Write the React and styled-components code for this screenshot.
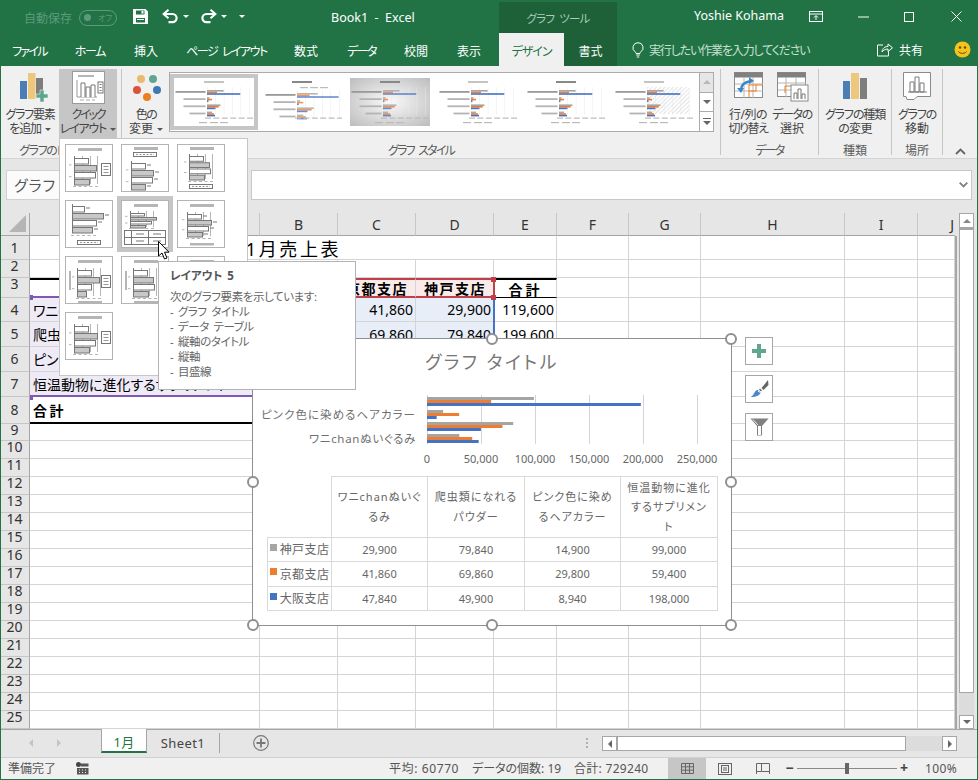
import React from 'react';
import styled, {createGlobalStyle} from 'styled-components';

const GlobalStyle = createGlobalStyle`
  html, body { margin: 0; padding: 0; background: #fff; }
  body {
    font-family: "Noto Sans", "Noto Sans CJK JP", sans-serif;
    font-feature-settings: "palt";
    overflow: hidden;
  }
  * { box-sizing: border-box; }
`;

const GREEN = '#217346';
const DARK_GREEN = '#1e6139';
const GREY = '#a5a5a5';
const ORANGE = '#ed7d31';
const BLUE = '#4472c4';

const Window = styled.div`
  position: relative;
  width: 978px;
  height: 780px;
  overflow: hidden;
  display: flex;
  flex-direction: column;
  background: #fff;
  &::after {
    content: '';
    position: absolute;
    inset: 0;
    border: 1px solid ${GREEN};
    pointer-events: none;
    z-index: 9;
  }
`;

/* ---------- title bar ---------- */
const TitleBar = styled.div`
  height: 33px;
  display: flex;
  background: ${GREEN};
  color: #fff;
  font-size: 12px;
`;
const Qat = styled.div`
  width: 331px;
  padding-left: 24px;
  display: flex;
  align-items: center;
`;
const QatItem = styled.div`
  margin-left: ${p => p.$ml || 0}px;
  display: flex;
  align-items: center;
`;
const AutoSave = styled.span`
  color: #5c9a7b;
  font-size: 12px;
  width: 48px;
  white-space: nowrap;
  position: relative;
  top: 1px;
`;
const Toggle = styled.div`
  margin-left: 7px;
  width: 38px;
  height: 16px;
  border: 1px solid #5c9a7b;
  border-radius: 8px;
  display: flex;
  align-items: center;
  padding-left: 4px;
  color: #5c9a7b;
  font-size: 8px;
  gap: 7px;
  position: relative;
  top: 1px;
  &::before {
    content: '';
    width: 7px;
    height: 7px;
    border-radius: 50%;
    background: #5c9a7b;
  }
`;
const Caret = styled.span`
  display: inline-block;
  margin-left: ${p => p.$ml || 0}px;
  width: 0;
  height: 0;
  border-left: 3px solid transparent;
  border-right: 3px solid transparent;
  border-top: 3px solid ${p => p.$color || '#fff'};
`;
const DocTitle = styled.div`
  width: 168px;
  font-size: 12.5px;
  line-height: 35px;
  white-space: pre;
`;
const ToolHeader = styled.div`
  margin-top: 2px;
  width: 118px;
  background: ${DARK_GREEN};
  color: #a9cdb9;
  font-size: 11.5px;
  letter-spacing: -.8px;
  word-spacing: 3px;
  text-align: center;
  line-height: 34px;
`;
const UserName = styled.div`
  margin-left: 77px;
  width: 90px;
  font-size: 12.5px;
  line-height: 32px;
  white-space: nowrap;
`;
const WinButton = styled.div`
  margin-left: ${p => p.$ml}px;
  display: flex;
  align-items: center;
`;

/* ---------- tab row ---------- */
const TabRow = styled.div`
  height: 33px;
  display: flex;
  background: ${GREEN};
  color: #fff;
  font-size: 12px;
`;
const RibbonTab = styled.div`
  width: ${p => p.$w}px;
  text-align: center;
  line-height: 37px;
  white-space: nowrap;
  letter-spacing: ${p => p.$ls || 0}px;
  word-spacing: 3px;
  background: ${p => (p.$active ? '#f0f0f0' : p.$dark ? DARK_GREEN : 'transparent')};
  color: ${p => (p.$active ? GREEN : '#fff')};
`;
const TellMe = styled.div`
  margin-left: 15px;
  width: 245px;
  display: flex;
  align-items: center;
  gap: 5px;
  color: #c8e0d2;
  font-size: 12px;
  letter-spacing: -1.15px;
  white-space: nowrap;
`;
const Share = styled.div`
  width: 60px;
  display: flex;
  align-items: center;
  gap: 6px;
  white-space: nowrap;
`;
const Smiley = styled.div`
  margin-left: 17px;
  display: flex;
  align-items: center;
`;

/* ---------- ribbon ---------- */
const Ribbon = styled.div`
  height: 93px;
  display: flex;
  padding-top: 3px;
  background: #f0f0f0;
  border-bottom: 1px solid #d4d4d4;
  color: #444;
  font-size: 12px;
`;
const RibbonGroup = styled.div`
  width: ${p => p.$w}px;
  height: 86px;
  border-right: 1px solid #c6c6c6;
  display: flex;
  flex-direction: column;
`;
const GroupBody = styled.div`
  height: 72px;
  display: flex;
  align-items: flex-start;
`;
const GroupLabel = styled.div`
  height: 14px;
  line-height: 19px;
  text-align: center;
  color: #5a5a5a;
  font-size: 12px;
  letter-spacing: ${p => p.$ls || 0}px;
  word-spacing: 3px;
  white-space: nowrap;
`;
const RibbonButton = styled.div`
  width: ${p => p.$w}px;
  height: 69px;
  margin-left: ${p => p.$ml || 0}px;
  background: ${p => (p.$active ? '#c6c6c6' : 'transparent')};
  display: flex;
  flex-direction: column;
  align-items: center;
  line-height: 14px;
  text-align: center;
  white-space: nowrap;
`;
const IconSlot = styled.div`
  height: 39px;
  padding-top: 3px;
  padding-left: ${p => (p.$dx || 0) * 2}px;
  display: flex;
  justify-content: center;
`;
const LabelLine = styled.span`
  letter-spacing: ${p => p.$ls || 0}px;
`;
const Gallery = styled.div`
  margin-left: 2px;
  margin-top: 3px;
  width: 545px;
  height: 60px;
  border: 1px solid #ababab;
  display: flex;
  background: #fff;
`;
const StyleCell = styled.div`
  width: 88px;
  height: 56px;
  margin-top: 1px;
  border: 4px solid ${p => (p.$active ? '#c6c6c6' : 'transparent')};
`;
const ThumbSvg = styled.svg`
  display: block;
  filter: blur(.3px);
`;
const GalleryScroll = styled.div`
  margin-left: 1px;
  width: 14px;
  display: flex;
  flex-direction: column;
  background: #f7f7f7;
  border-left: 1px solid #ababab;
`;
const GalleryArrow = styled.div`
  flex: 1;
  display: flex;
  flex-direction: column;
  gap: 2px;
  align-items: center;
  justify-content: center;
  background: ${p => (p.$off ? '#e6e6e6' : '#fff')};
  border-bottom: 1px solid #ababab;
  &:last-child { border-bottom: 0; }
`;
const UpCaret = styled(Caret)`
  border-top: 0;
  border-bottom: 4px solid ${p => p.$color || '#b8b8b8'};
  border-left-width: 4px;
  border-right-width: 4px;
`;
const BarMark = styled.span`
  width: 8px;
  height: 1px;
  background: #666;
`;
const Collapse = styled.div`
  margin-left: 12px;
  align-self: flex-end;
  padding-bottom: 3px;
  display: flex;
`;

/* ---------- formula bar ---------- */
const FormulaBar = styled.div`
  height: 54px;
  padding: 11px 6px 0;
  display: flex;
  background: #e6e6e6;
`;
const NameBox = styled.div`
  width: 200px;
  height: 30px;
  background: #fbfbfb;
  border: 1px solid #d0d0d0;
  padding-left: 7px;
  font-size: 15px;
  line-height: 29px;
  letter-spacing: 1px;
  color: #555;
`;
const FormulaInput = styled.div`
  margin-left: 45px;
  width: 721px;
  height: 30px;
  background: #fff;
  border: 1px solid #c8c8c8;
  display: flex;
  justify-content: flex-end;
  align-items: center;
  padding-right: 3px;
`;

/* ---------- sheet ---------- */
const SheetArea = styled.div`
  height: 516px;
  display: flex;
  background: #e6e6e6;
`;
const Grid = styled.div`
  position: relative;
  display: grid;
  grid-template-columns: ${p => p.$cols};
  grid-template-rows: ${p => p.$rows};
  margin-right: 2px;
  background: #fff;
  width: 955px;
  height: 516px;
  &::after {
    content: '';
    position: absolute;
    top: 23px;
    right: -2px;
    bottom: 0;
    width: 2px;
    background: #a6a6a6;
  }
`;
const Corner = styled.div`
  background: #e6e6e6;
  border-bottom: 1px solid #a6a6a6;
  border-right: 1px solid #a6a6a6;
  display: flex;
  align-items: flex-end;
  justify-content: flex-end;
  padding: 0 3px 3px 0;
  &::before {
    content: '';
    width: 0;
    height: 0;
    border-left: 17px solid transparent;
    border-bottom: 17px solid #b5b5b5;
  }
`;
const ColHead = styled.div`
  background: #e6e6e6;
  border-bottom: 1px solid #a6a6a6;
  border-right: ${p => (p.$last ? '0' : '1px solid #c6c6c6')};
  display: flex;
  align-items: center;
  justify-content: ${p => (p.$last ? 'flex-end' : 'center')};
  padding-right: ${p => (p.$last ? 1 : 0)}px;
  font-size: 14px;
  color: #333;
`;
const RowHead = styled.div`
  background: #e6e6e6;
  border-bottom: 1px solid #c6c6c6;
  border-right: 1px solid #a6a6a6;
  display: flex;
  align-items: ${p => (p.$short ? 'flex-start' : 'center')};
  justify-content: center;
  font-size: 14px;
  line-height: ${p => (p.$short ? 12 : 14)}px;
  color: #333;
`;
const Cell = styled.div`
  grid-column: ${p => (p.$span ? `span ${p.$span}` : 'auto')};
  border-right: 1px solid #d4d4d4;
  border-bottom: ${p => p.$bottom || '1px solid #d4d4d4'};
  border-top: ${p => p.$top || '0'};
  background: ${p => p.$fill || '#fff'};
  color: #000;
  display: flex;
  align-items: center;
  justify-content: ${p => p.$align || 'flex-start'};
  padding: 0 2px 0 3px;
  font-size: ${p => p.$size || 14}px;
  font-weight: ${p => (p.$bold ? 700 : 400)};
  letter-spacing: ${p => p.$spacing || 0}px;
  white-space: nowrap;
  min-width: 0;
`;
const Marker = styled.div`
  position: absolute;
  left: ${p => p.$x}px;
  top: ${p => p.$y}px;
  width: ${p => p.$w}px;
  height: ${p => p.$h}px;
  background: ${p => p.$color};
  z-index: 1;
`;
const VScroll = styled.div`
  width: 15px;
  margin-left: 2px;
  display: flex;
  flex-direction: column;
`;
const VButton = styled.div`
  height: ${p => p.$h}px;
  background: #fff;
  border: 1px solid #a6a6a6;
  display: flex;
  align-items: center;
  justify-content: center;
`;
const VThumb = styled.div`
  height: 465px;
  background: #fff;
  border: 1px solid #a6a6a6;
  border-top-width: 2px;
`;
const VTrack = styled.div`
  flex: 1;
  background: #dcdcdc;
`;
const DownCaret = styled(Caret)`
  border-top: 4px solid #666;
  border-left-width: 4px;
  border-right-width: 4px;
`;

/* ---------- chart ---------- */
const Chart = styled.div`
  position: absolute;
  left: 252px;
  top: 338px;
  width: 480px;
  height: 288px;
  background: #fff;
  border: 1px solid #8f8f8f;
  z-index: 1;
  display: flex;
  flex-direction: column;
`;
const ChartTitle = styled.div`
  margin-top: 8px;
  height: 30px;
  line-height: 30px;
  text-align: center;
  font-size: 18px;
  letter-spacing: 2.5px;
  color: #777;
`;
const PlotSvg = styled.svg`
  display: block;
  margin-top: 18px;
`;
const DataTable = styled.table`
  margin: 9px 0 0 14px;
  width: 451px;
  border-collapse: collapse;
  table-layout: fixed;
  font-size: 11px;
  color: #666;
  text-align: center;
  td {
    border: 1px solid #d9d9d9;
    padding: 0;
    height: 24.5px;
    white-space: nowrap;
  }
  tr:first-child td:first-child {
    border-top: 0;
    border-left: 0;
  }
  tr:first-child td {
    height: 60.5px;
    line-height: 19.5px;
    letter-spacing: 1px;
  }
`;
const LegendCell = styled.div`
  display: flex;
  align-items: center;
  justify-content: center;
  gap: 3px;
  font-size: 12px;
  letter-spacing: .4px;
`;
const Swatch = styled.span`
  width: 7px;
  height: 7px;
  background: ${p => p.$color};
  position: relative;
  top: -2px;
`;
const Handle = styled.div`
  position: absolute;
  left: ${p => p.$x}%;
  top: ${p => p.$y}%;
  width: 12px;
  height: 12px;
  margin: -6px 0 0 -6px;
  border-radius: 50%;
  background: #fff;
  border: 2px solid #8f8f8f;
`;
const ChartTools = styled.div`
  position: absolute;
  left: 745px;
  top: 337px;
  display: flex;
  flex-direction: column;
  gap: 10px;
  z-index: 1;
`;
const ToolButton = styled.div`
  width: 28px;
  height: 28px;
  background: #fff;
  border: 1px solid #a6a6a6;
  display: flex;
  align-items: center;
  justify-content: center;
`;

/* ---------- quick layout menu ---------- */
const LayoutMenu = styled.div`
  position: absolute;
  left: 59px;
  top: 138px;
  width: 189px;
  height: 238px;
  background: #fff;
  border: 1px solid #c6c6c6;
  padding: 5px;
  display: grid;
  grid-template-columns: repeat(3, 48px);
  grid-auto-rows: 48px;
  gap: 8px;
  z-index: 3;
`;
const LayoutThumb = styled.div`
  width: 48px;
  height: 48px;
  border: 1px solid #b4b4b4;
  background: #fff;
  outline: ${p => (p.$active ? '4px solid #c6c6c6' : 'none')};
  box-shadow: ${p => (p.$active ? '0 0 0 1px #c6c6c6' : 'none')};
`;
const Tip = styled.div`
  position: absolute;
  left: 158px;
  top: 261px;
  width: 198px;
  height: 129px;
  background: #fff;
  border: 1px solid #b4b4b4;
  padding: 6px 11px;
  font-size: 11.5px;
  line-height: 15px;
  letter-spacing: -.4px;
  word-spacing: 2px;
  color: #666;
  z-index: 4;
`;
const TipTitle = styled.div`
  font-weight: 700;
  font-size: 11.5px;
  letter-spacing: 0;
  color: #555;
  margin-bottom: 6px;
`;
const Cursor = styled.svg`
  position: absolute;
  left: 158px;
  top: 241px;
  z-index: 5;
`;

/* ---------- sheet tabs ---------- */
const TabBar = styled.div`
  height: 28px;
  display: flex;
  background: #e6e6e6;
  border-top: 1px solid #a6a6a6;
  font-size: 13px;
  color: #444;
`;
const NavArrows = styled.div`
  width: 101px;
  padding-left: 29px;
  display: flex;
  align-items: center;
  gap: 24px;
  padding-bottom: 2px;
`;
const SideCaret = styled.span`
  width: 0;
  height: 0;
  border-top: 4px solid transparent;
  border-bottom: 4px solid transparent;
  border-${p => (p.$right ? 'left' : 'right')}: 4px solid ${p => p.$color || '#c4c4c4'};
`;
const SheetTab = styled.div`
  width: ${p => p.$w}px;
  height: ${p => (p.$active ? 24 : 23)}px;
  margin-top: ${p => (p.$active ? -1 : 0)}px;
  background: ${p => (p.$active ? '#fff' : 'transparent')};
  border-left: ${p => (p.$active ? '1px solid #a6a6a6' : '0')};
  border-right: ${p => (p.$active ? '1px solid #a6a6a6' : '0')};
  border-bottom: ${p => (p.$active ? `2px solid ${GREEN}` : '0')};
  color: ${p => (p.$active ? GREEN : '#444')};
  letter-spacing: .4px;
  text-align: center;
  line-height: 26px;
`;
const TabSeparator = styled.div`
  width: 1px;
  height: 20px;
  margin-top: 3px;
  background: #a6a6a6;
`;
const AddSheet = styled.div`
  margin-left: 33px;
  margin-top: 5px;
  width: 16px;
  height: 16px;
`;
const SplitDots = styled.div`
  margin-left: 317px;
  margin-top: 8px;
  display: flex;
  flex-direction: column;
  gap: 2px;
  span { width: 2px; height: 2px; background: #b0b0b0; }
`;
const HScroll = styled.div`
  margin-left: 14px;
  margin-top: 6px;
  width: 355px;
  height: 15px;
  display: flex;
  background: #dcdcdc;
`;
const HButton = styled.div`
  width: 15px;
  background: #fff;
  border: 1px solid #a6a6a6;
  display: flex;
  align-items: center;
  justify-content: center;
`;
const HThumb = styled.div`
  width: 289px;
  background: #fff;
  border: 1px solid #a6a6a6;
`;
const HTrack = styled.div`
  flex: 1;
`;

/* ---------- status bar ---------- */
const StatusBar = styled.div`
  height: 23px;
  display: flex;
  align-items: flex-start;
  background: #f0f0f0;
  border-top: 1px solid #d0d0d0;
  font-size: 12px;
  color: #555;
  line-height: 21px;
`;
const StatusItem = styled.div`
  margin-left: ${p => p.$ml || 0}px;
  white-space: nowrap;
  display: flex;
  width: ${p => (p.$w ? `${p.$w}px` : 'auto')};
  letter-spacing: ${p => p.$ls || 0}px;
  align-items: center;
  height: 21px;
`;
const ViewButton = styled.div`
  width: ${p => p.$w}px;
  height: 21px;
  background: ${p => (p.$active ? '#c6c6c6' : 'transparent')};
  display: flex;
  align-items: center;
  justify-content: center;
`;
const ZoomTrack = styled.div`
  width: 100px;
  height: 1px;
  margin-top: 10px;
  background: #8a8a8a;
  display: flex;
  justify-content: center;
  align-items: center;
  &::after {
    content: '';
    width: 4px;
    height: 11px;
    background: #666;
  }
`;
const ZoomSign = styled.div`
  width: ${p => p.$w}px;
  text-align: center;
  color: #444;
  font-size: 14px;
  font-weight: 700;
  line-height: 20px;
`;

/* ---------- icons ---------- */
const SaveIcon = () => (
  <svg width="15" height="15" viewBox="0 0 15 15">
    <path fill="#fff" fillRule="evenodd" d="M0 0h12.5L15 2.5V15H0zM3 1.5v4h8.5v-4zM3 9v4.5h9V9z" />
    <rect x="8.5" y="2" width="2" height="2.6" fill="#fff" />
    <rect x="4" y="10" width="7" height="1" fill="#fff" />
  </svg>
);
const UndoIcon = ({flip}) => (
  <svg width="17" height="15" viewBox="0 0 17 15" style={{transform: flip ? 'scaleX(-1)' : 'none'}}>
    <path d="M3 5h7.5a4 4 0 0 1 0 8.2H6.5" fill="none" stroke="#fff" strokeWidth="2.2" />
    <path d="M6.5 0.8L1.6 5l4.9 4.2" fill="none" stroke="#fff" strokeWidth="2" />
  </svg>
);
const BarsIcon = () => (
  <svg width="30" height="30" viewBox="0 0 30 30">
    <rect x="2" y="9" width="7" height="18" fill="#4a7eb5" />
    <rect x="10" y="1" width="7.5" height="26" fill="#eec77e" />
    <rect x="18" y="6" width="7" height="18" fill="#7d7d7d" />
    <path d="M22 18h4v4h4v4h-4v4h-4v-4h-4v-4h4z" fill="#5ba58e" stroke="#f0f0f0" strokeWidth=".6" />
  </svg>
);
const QuickIcon = () => (
  <svg width="33" height="33" viewBox="0 0 33 33" style={{marginTop: -1}}>
    <rect x=".5" y=".5" width="32" height="32" fill="#fff" stroke="#9a9a9a" />
    <rect x="6" y="4" width="16" height="2" fill="#b5b5b5" />
    <path d="M5 9v17h20" fill="none" stroke="#999" />
    <path d="M9 26V12h4v14M14 26V16h4v10M19 26V14h4v12" fill="#fff" stroke="#777" />
    <rect x="26" y="11" width="5" height="11" fill="#fff" stroke="#777" />
    <path d="M27.5 13.5h2M27.5 16.5h2M27.5 19.5h2" stroke="#777" />
    <path d="M8 29h4M14 29h4M20 29h3" stroke="#aaa" />
  </svg>
);
const PaletteIcon = () => (
  <svg width="30" height="30" viewBox="0 0 30 30">
    <circle cx="9" cy="7" r="4" fill="#e9b96e" />
    <circle cx="21" cy="7" r="4" fill="#5fa592" />
    <circle cx="5" cy="18" r="4" fill="#d8533a" />
    <circle cx="25" cy="18" r="4" fill="#3f79b5" />
    <circle cx="15" cy="25" r="4" fill="#ec7f1f" />
  </svg>
);
const SwitchIcon = () => (
  <svg width="30" height="28" viewBox="0 0 30 28">
    <rect x=".5" y=".5" width="28" height="25" fill="#fff" stroke="#8a8a8a" />
    <rect x=".5" y=".5" width="28" height="5" fill="#808080" />
    <path d="M10 5v21M19 5v21M1 12h28M1 19h28" stroke="#b5b5b5" />
    <rect x="15" y="13" width="7" height="6" fill="none" stroke="#ec7f1f" />
    <path d="M15 19v6M22 13h6" stroke="#ec7f1f" />
    <path d="M7 18c0-5 3-8 10-9" fill="none" stroke="#3d86c6" strokeWidth="2.4" />
    <path d="M15 5l5 4-5 3zM3 16l4 5 3-5z" fill="#3d86c6" />
  </svg>
);
const SelectDataIcon = () => (
  <svg width="33" height="30" viewBox="0 0 33 30">
    <rect x=".5" y=".5" width="28" height="24" fill="#fff" stroke="#8a8a8a" />
    <rect x=".5" y=".5" width="28" height="5" fill="#808080" />
    <path d="M9 5v20M19 5v20M1 11h28M1 18h28" stroke="#b5b5b5" />
    <path d="M8 21v-7h7" fill="none" stroke="#ec7f1f" />
    <rect x="14" y="13" width="17" height="16" fill="#fff" stroke="#8a8a8a" />
    <path d="M17 27V21h3v6M21 27V17h3v10M25 27V22h3v5" fill="#fff" stroke="#777" />
  </svg>
);
const ChangeTypeIcon = () => (
  <svg width="26" height="28" viewBox="0 0 26 28">
    <rect x="1" y="9" width="7" height="18" fill="#4a7eb5" />
    <rect x="9" y="1" width="8" height="26" fill="#eec77e" />
    <rect x="18" y="6" width="7" height="21" fill="#7d7d7d" />
  </svg>
);
const MoveIcon = () => (
  <svg width="30" height="28" viewBox="0 0 30 28">
    <path d="M.5.5h27v24H14l-3 3H4l-1-3H.5z" fill="#fff" stroke="#8a8a8a" />
    <path d="M7 20V10h4v10zM12 20V5h4v15zM17 20v-9h4v9zM5 20h19" fill="#fff" stroke="#7a7a7a" />
  </svg>
);
const Chevron = () => (
  <svg width="11" height="7" viewBox="0 0 11 7">
    <path d="M1 6l4.5-4.5L10 6" fill="none" stroke="#666" strokeWidth="1.8" />
  </svg>
);
const DownChevron = () => (
  <svg width="9" height="6" viewBox="0 0 9 6">
    <path d="M.7.7l3.800 3.800L8.300.7" fill="none" stroke="#808080" strokeWidth="1.800" />
  </svg>
);
const RibbonDisplayIcon = () => (
  <svg width="14" height="11" viewBox="0 0 14 11">
    <rect x=".5" y=".5" width="13" height="10" fill="none" stroke="#fff" />
    <path d="M1 3h12" stroke="#fff" />
    <path d="M7 9V5M5 6.5L7 4.5l2 2" fill="none" stroke="#fff" />
  </svg>
);
const MinIcon = () => <svg width="11" height="2" viewBox="0 0 11 2"><path d="M0 1h11" stroke="#fff" /></svg>;
const MaxIcon = () => <svg width="10" height="10" viewBox="0 0 10 10"><rect x=".5" y=".5" width="9" height="9" fill="none" stroke="#fff" /></svg>;
const CloseIcon = () => <svg width="11" height="11" viewBox="0 0 11 11"><path d="M.5.5l10 10M10.5.5l-10 10" stroke="#fff" /></svg>;
const BulbIcon = () => (
  <svg width="12" height="16" viewBox="0 0 12 16">
    <path d="M6 .7a5 5 0 0 0-2.8 9.2c.5.4.8 1 .8 1.6h4c0-.6.3-1.200.8-1.600A5 5 0 0 0 6 .7z" fill="none" stroke="#fff" />
    <path d="M4.200 13h3.600M4.800 15h2.400" stroke="#fff" />
  </svg>
);
const ShareIcon = () => (
  <svg width="16" height="15" viewBox="0 0 16 15">
    <path d="M6 3H.5v11h11V9" fill="none" stroke="#fff" />
    <path d="M5 10c.5-4 3-5.500 6-5.500V2l4.500 3.800L11 9.500V7C8.500 7 6.500 8 5 10z" fill="none" stroke="#fff" />
  </svg>
);
const SmileyIcon = () => (
  <svg width="17" height="17" viewBox="0 0 17 17">
    <circle cx="8.500" cy="8.500" r="8" fill="#f6c31c" />
    <circle cx="6" cy="6.500" r="1.200" fill="#5c4a00" />
    <circle cx="11" cy="6.500" r="1.200" fill="#5c4a00" />
    <path d="M4.500 10.500c1.500 2.500 6.500 2.500 8 0" fill="none" stroke="#5c4a00" />
  </svg>
);
const PlusIcon = () => (
  <svg width="14" height="14" viewBox="0 0 14 14">
    <path d="M5 0h4v5h5v4H9v5H5V9H0V5h5z" fill="#5fa78f" />
  </svg>
);
const BrushIcon = () => (
  <svg width="19" height="18" viewBox="0 0 19 18">
    <path d="M18 0l.5 5-5 5-2-2z" fill="#666" />
    <path d="M10 8.500l2 2-1 1-2-2z" fill="#666" />
    <path d="M8 10l2.500 2.500C10 15 7 17 .5 17c2-1 3-2.500 4-4.500C5.500 10.500 7 10 8 10z" fill="#4a86c8" />
    <path d="M8 11l1.500 1.500" stroke="#fff" />
  </svg>
);
const FunnelIcon = () => (
  <svg width="19" height="18" viewBox="0 0 19 18">
    <path d="M.5.500h18L12 8v9.500H7V8z" fill="#808080" />
    <path d="M8 8h3v9H8z" fill="#fff" />
    <path d="M3 1.500l5 5.500" stroke="#fff" opacity=".8" />
  </svg>
);
const AddIcon = () => (
  <svg width="16" height="16" viewBox="0 0 16 16">
    <circle cx="8" cy="8" r="7.300" fill="none" stroke="#777" strokeWidth="1.200" />
    <path d="M8 3.500v9M3.500 8h9" stroke="#777" strokeWidth="1.800" />
  </svg>
);
const MacroIcon = () => (
  <svg width="13" height="13" viewBox="0 0 13 13">
    <circle cx="2.500" cy="2.500" r="2.500" fill="#444" />
    <path d="M1 6h11.500v6.500H1zM5 1.500h7.500v3H5z" fill="#555" />
    <path d="M3 8h1M6 8h1M9 8h1M3 10.500h1M6 10.500h1M9 10.500h1" stroke="#f0f0f0" />
  </svg>
);
const NormalViewIcon = () => (
  <svg width="13" height="11" viewBox="0 0 13 11">
    <path d="M.5.500h12v10H.5zM.5 3.800h12M.5 7.200h12M4.500.500v10M8.500.500v10" fill="none" stroke="#666" />
  </svg>
);
const PageViewIcon = () => (
  <svg width="14" height="12" viewBox="0 0 14 12">
    <rect x=".5" y=".5" width="13" height="11" fill="none" stroke="#666" />
    <rect x="3.500" y="2.500" width="7" height="7" fill="none" stroke="#666" />
    <path d="M5 5h4M5 7h4" stroke="#666" />
  </svg>
);
const BreakViewIcon = () => (
  <svg width="14" height="12" viewBox="0 0 14 12">
    <path d="M.5 11V.5h13V11M.5 8.500h5v-8M5.500 8.500h8" fill="none" stroke="#666" />
  </svg>
);

/* ---------- gallery thumbnails: tiny bar charts, the labels shrink to dashes ---------- */
const series = [
  [99000, 59400, 198000],
  [14900, 29800, 8940],
  [79840, 69860, 49900],
  [29900, 41860, 47840]
];
const labelWidths = [30, 22, 22, 16];
const colors = [GREY, ORANGE, BLUE];

const StyleThumb = ({id}) => {
  const shaded = id === 3;
  const hatch = id === 6;
  const boldTitle = id === 2 || id === 3 || id === 5;
  const top = id === 2 ? 15 : 12;
  const plotX = id === 2 ? 35 : 33;
  const scale = id === 2 ? 0.00021 : 0.000168;
  return (
    <ThumbSvg width="80" height="48" viewBox="0 0 80 48">
      <defs>
        <radialGradient id="shade" cx="50%" cy="50%" r="70%">
          <stop offset="0%" stopColor="#fafafa" />
          <stop offset="100%" stopColor="#bdbdbd" />
        </radialGradient>
        <pattern id="hatch" width="3" height="3" patternUnits="userSpaceOnUse" patternTransform="rotate(45)">
          <rect width="3" height="3" fill="#fff" />
          <path d="M0 0v3" stroke="#c8c8c8" />
        </pattern>
      </defs>
      <rect width="80" height="48" fill={shaded ? 'url(#shade)' : '#fff'} />
      {hatch && <rect x="33" y="9" width="42" height="27" fill="url(#hatch)" />}
      <rect x="30" y="3" width="20" height="2" fill={boldTitle ? '#888' : '#c4c4c4'} />
      {[0, 1, 2, 3, 4, 5].map(i => (
        <rect key={i} x={plotX + i * 8.4} y={top - 3} width=".5" height="28" fill="#e8e8e8" />
      ))}
      {series.map((row, r) => (
        <g key={r}>
          <rect x={plotX - 1.5 - labelWidths[r]} y={top + 1 + r * 7.2} width={labelWidths[r]} height="1.800" fill={r === 0 ? '#999' : '#b4b4b4'} />
          {row.map((v, s) => (
            <rect key={s} x={plotX} y={top + r * 7.2 + s * 1.6} width={v * scale} height="1.600" fill={colors[s]} opacity={shaded || id === 2 ? .8 : 1} />
          ))}
        </g>
      ))}
      {[0, 1, 2, 3, 4, 5].map(i => (
        <rect key={i} x={plotX - 2 + i * 8.4} y="39.500" width="6" height="1.200" fill="#bbb" />
      ))}
      {(id === 2 ? [[38, 9], [48, 9], [58, 9]] : [[25, 44], [36, 44], [46, 44]]).map(([x, y]) => (
        <rect key={x} x={x} y={y} width="8" height="1.200" fill="#bbb" />
      ))}
    </ThumbSvg>
  );
};

/* ---------- quick layout icons ---------- */
const layouts = [
  {title: [12, 3], legendRight: true, plot: [8, 11, 28], grid: true, bars: [14, 22, 21, 15], ticks: true, dash: 41},
  {title: [12, 2], legendTop: 7, plot: [9, 16, 28], bars: [14, 22, 21, 14], labels: true, ticks: true},
  {title: [12, 2], legendBottom: 39, plot: [11, 9, 25], grid: true, bars: [14, 20, 21, 15], ticks: true, dash: 36},
  {legendBottom: 39, plot: [6, 3, 28], bars: [12, 31, 24, 20], labels: true, dash: 34},
  {title: [12, 3], plot: [8, 10, 16], grid: true, bars: [14, 26, 21, 15], ticks: true, dash: 27, table: true},
  {title: [12, 3], bottomBar: 42, plot: [9, 11, 24], grid: true, bars: [14, 24, 21, 15], labels: true, ticks: true, dash: 37},
  {title: [12, 3], axisTitle: true, legendRight: true, plot: [11, 11, 28], grid: true, bars: [14, 22, 14, 9], ticks: true, dash: 41, bottomBar: 44},
  {title: [12, 3], axisTitle: true, plot: [11, 11, 28], grid: true, bars: [14, 20, 21, 15], ticks: true, dash: 41, bottomBar: 44},
  {title: [12, 3], plot: [11, 11, 28], grid: true, bars: [14, 20, 21, 15], ticks: true, dash: 41},
  {title: [12, 3], legendRight: true, plot: [8, 11, 28], grid: true, bars: [14, 23, 21, 15], ticks: true, dash: 41}
];

const LayoutIcon = ({l}) => {
  const [px, py, ph] = l.plot;
  const rowH = ph / 4;
  return (
    <svg width="46" height="46" viewBox="0 0 46 46" style={{display: 'block'}}>
      {l.title && <rect x={l.title[0]} y={l.title[1]} width="24" height="3" fill="#b5b5b5" />}
      {l.axisTitle && <rect x="3" y="14" width="2" height="19" fill="#b5b5b5" />}
      {l.grid && [8, 16, 23].map(d => <path key={d} d={`M${px + d + .5} ${py}v${ph}`} stroke="#b5b5b5" />)}
      <path d={`M${px + .5} ${py}v${ph}`} stroke="#777" />
      {l.ticks && [.3, .72].map(t => <path key={t} d={`M${px - 5} ${py + ph * t + .5}h2.500`} stroke="#b5b5b5" />)}
      {l.bars.map((w, i) => (
        <g key={i}>
          <rect x={px + .5} y={py + 2.500 + i * rowH} width={w} height={rowH - 1.500} fill={i % 2 ? '#c8c8c8' : '#fff'} stroke="#777" />
          {l.labels && <path d={`M${px + w + 2} ${py + 4 + i * rowH}h4`} stroke="#777" />}
        </g>
      ))}
      {l.dash && <path d={`M${px - 1} ${l.dash + .5}h26`} stroke="#b5b5b5" strokeDasharray="3 2.500" />}
      {l.legendRight && (
        <g>
          <rect x="35.500" y="18.500" width="9" height="12" fill="#fff" stroke="#777" />
          <path d="M37.500 21.500h5M37.500 24.500h5M37.500 27.500h5" stroke="#999" />
        </g>
      )}
      {(l.legendTop || l.legendBottom) && (
        <g>
          <rect x="11.500" y={(l.legendTop || l.legendBottom) + .5} width="23" height="4" fill="#fff" stroke="#777" />
          <path d={`M14 ${(l.legendTop || l.legendBottom) + 2.500}h18`} stroke="#999" strokeDasharray="2 1.500" />
        </g>
      )}
      {l.table && (
        <g>
          <rect x="2.500" y="29.500" width="41" height="14" fill="#fff" stroke="#777" />
          <path d="M2.500 36.500h41M9.500 29.500v14M26.500 29.500v14" stroke="#777" />
          <path d="M14 33h8M31 33h8M14 40h8M31 40h8" stroke="#777" />
        </g>
      )}
      {l.bottomBar && <rect x="12" y={l.bottomBar} width="24" height="2.500" fill="#b5b5b5" />}
    </svg>
  );
};

/* ---------- chart plot ---------- */
const ChartPlot = () => {
  const x0 = 427;
  const perUnit = 54 / 50000;
  const gridXs = [0, 1, 2, 3, 4, 5].map(i => x0 + i * 54);
  const tops = [397, 410, 422, 434];
  return (
    <PlotSvg width="478" height="72" viewBox="253 395 478 72">
      {gridXs.map(x => <path key={x} d={`M${x + .5} 395V444`} stroke="#d4d4d4" />)}
      {series.map((row, r) => row.map((v, s) => (
        <rect key={`${r}${s}`} x={x0} y={tops[r] + s * 3} width={v * perUnit} height="3" fill={colors[s]} />
      )))}
      <g fontSize="11.500" fill="#707070" textAnchor="end">
        <text x="416" y="419" letterSpacing="1.05">ピンク色に染めるヘアカラー</text>
        <text x="416" y="443" letterSpacing=".7">ワニchanぬいぐるみ</text>
      </g>
      <g fontSize="11" fill="#666" textAnchor="middle">
        {['0', '50,000', '100,000', '150,000', '200,000', '250,000'].map((t, i) => (
          <text key={t} x={gridXs[i]} y="463">{t}</text>
        ))}
      </g>
    </PlotSvg>
  );
};

/* ---------- sheet data ---------- */
const colWidths = [230, 78, 78, 78, 63, 72, 72, 144, 73, 37];
const colLetters = ['A', 'B', 'C', 'D', 'E', 'F', 'G', 'H', 'I', 'J'];
const rowHeights = [24, 18, 20, 24, 25, 25, 25, 27, 17, ...Array(16).fill(18)];

const RED_LINE = '2px solid #c0404a';
const PURPLE_LINE = '2px solid #7f58b6';
const BLACK_LINE = '2px solid #000';
const LAVENDER = '#eeeaf6';
const PINK = '#fbeaea';
const PALE_BLUE = '#e7eef8';

const values = {
  '3A': {top: BLACK_LINE, bottom: PURPLE_LINE},
  '4A': {text: 'ワニchanぬいぐるみ', fill: LAVENDER},
  '5A': {text: '爬虫類になれるパウダー', fill: LAVENDER},
  '6A': {text: 'ピンク色に染めるヘアカラー', fill: LAVENDER},
  '7A': {text: '恒温動物に進化するサプリメント', fill: LAVENDER, bottom: PURPLE_LINE},
  '8A': {text: '合計', bold: true, bottom: BLACK_LINE, spacing: 2.500},
  '3B': {text: '大阪支店', bold: true, fill: PINK, top: RED_LINE, bottom: RED_LINE, align: 'center', spacing: 1.500},
  '3C': {text: '京都支店', bold: true, fill: PINK, top: RED_LINE, bottom: RED_LINE, align: 'center', spacing: 1.500},
  '3D': {text: '神戸支店', bold: true, fill: PINK, top: RED_LINE, bottom: RED_LINE, align: 'center', spacing: 1.500},
  '3E': {text: '合計', bold: true, top: BLACK_LINE, bottom: '1px solid #000', align: 'center', spacing: 3},
  '4B': {text: '47,840', fill: PALE_BLUE, align: 'flex-end'},
  '5B': {text: '49,900', fill: PALE_BLUE, align: 'flex-end'},
  '4C': {text: '41,860', fill: PALE_BLUE, align: 'flex-end'},
  '5C': {text: '69,860', fill: PALE_BLUE, align: 'flex-end'},
  '4D': {text: '29,900', fill: PALE_BLUE, align: 'flex-end'},
  '5D': {text: '79,840', fill: PALE_BLUE, align: 'flex-end'},
  '4E': {text: '119,600', align: 'flex-end'},
  '5E': {text: '199,600', align: 'flex-end'}
};

const renderCell = (r, col) => {
  const c = values[`${r}${col}`] || {};
  return (
    <Cell key={`${r}${col}`} $fill={c.fill} $top={c.top} $bottom={c.bottom} $align={c.align} $bold={c.bold} $spacing={c.spacing}>
      {c.text}
    </Cell>
  );
};

const Sheet = () => (
  <Grid
    $cols={`30px ${colWidths.map(w => `${w}px`).join(' ')}`}
    $rows={`23px ${rowHeights.map(h => `${h}px`).join(' ')}`}
  >
    <Corner />
    {colLetters.map(l => <ColHead key={l} $last={l === 'J'}>{l}</ColHead>)}
    {rowHeights.map((h, i) => {
      const r = i + 1;
      return (
        <React.Fragment key={r}>
          <RowHead $short={h <= 20}>{r}</RowHead>
          {r === 1 ? (
            <>
              <Cell $span={5} $align="center" $size={18} $spacing={2.600}>1月売上表</Cell>
              {colLetters.slice(5).map(col => renderCell(r, col))}
            </>
          ) : colLetters.map(col => renderCell(r, col))}
        </React.Fragment>
      );
    })}
  </Grid>
);

const tableRows = [
  {name: '神戸支店', color: GREY, cells: ['29,900', '79,840', '14,900', '99,000']},
  {name: '京都支店', color: ORANGE, cells: ['41,860', '69,860', '29,800', '59,400']},
  {name: '大阪支店', color: BLUE, cells: ['47,840', '49,900', '8,940', '198,000']}
];

const RibbonLabel = ({a, b, la, lb, caret}) => (
  <>
    <LabelLine $ls={la}>{a}</LabelLine>
    <LabelLine $ls={lb}>{b}{caret && <Caret $ml={4} $color="#555" style={{verticalAlign: 'middle'}} />}</LabelLine>
  </>
);

const App = () => (
  <Window>
    <GlobalStyle />

    <TitleBar>
      <Qat>
        <AutoSave>自動保存</AutoSave>
        <Toggle>オフ</Toggle>
        <QatItem $ml={16}><SaveIcon /></QatItem>
        <QatItem $ml={14}><UndoIcon /><Caret $ml={4} /></QatItem>
        <QatItem $ml={11}><UndoIcon flip /><Caret $ml={4} /></QatItem>
        <QatItem $ml={12}><Caret /></QatItem>
      </Qat>
      <DocTitle>Book1  -  Excel</DocTitle>
      <ToolHeader>グラフ ツール</ToolHeader>
      <UserName>Yoshie Kohama</UserName>
      <WinButton $ml={25}><RibbonDisplayIcon /></WinButton>
      <WinButton $ml={35}><MinIcon /></WinButton>
      <WinButton $ml={35}><MaxIcon /></WinButton>
      <WinButton $ml={37}><CloseIcon /></WinButton>
    </TitleBar>

    <TabRow>
      <RibbonTab $w={59} $ls={-1.7}>ファイル</RibbonTab>
      <RibbonTab $w={62} $ls={-1.3}>ホーム</RibbonTab>
      <RibbonTab $w={50}>挿入</RibbonTab>
      <RibbonTab $w={111} $ls={-1.5}>ページ レイアウト</RibbonTab>
      <RibbonTab $w={48}>数式</RibbonTab>
      <RibbonTab $w={63} $ls={-1.6}>データ</RibbonTab>
      <RibbonTab $w={46}>校閲</RibbonTab>
      <RibbonTab $w={60}>表示</RibbonTab>
      <RibbonTab $w={65} $active $ls={-1}>デザイン</RibbonTab>
      <RibbonTab $w={53} $dark>書式</RibbonTab>
      <TellMe><BulbIcon />実行したい作業を入力してください</TellMe>
      <Share><ShareIcon />共有</Share>
      <Smiley><SmileyIcon /></Smiley>
    </TabRow>

    <Ribbon>
      <RibbonGroup $w={122}>
        <GroupBody>
          <RibbonButton $w={52} $ml={4}>
            <IconSlot $dx={3}><BarsIcon /></IconSlot>
            <RibbonLabel a="グラフ要素" la={-1.2} b="を追加" lb={-1.2} caret />
          </RibbonButton>
          <RibbonButton $w={58} $ml={3} $active>
            <IconSlot><QuickIcon /></IconSlot>
            <RibbonLabel a="クイック" la={-2.2} b="レイアウト" lb={-1.2} caret />
          </RibbonButton>
        </GroupBody>
        <GroupLabel $ls={-1.4}>グラフのレイアウト</GroupLabel>
      </RibbonGroup>
      <RibbonGroup $w={599}>
        <GroupBody>
          <RibbonButton $w={42} $ml={3}>
            <IconSlot $dx={1}><PaletteIcon /></IconSlot>
            <RibbonLabel a="色の" la={-1.5} b="変更" caret />
          </RibbonButton>
          <Gallery>
            {[1, 2, 3, 4, 5, 6].map(id => (
              <StyleCell key={id} $active={id === 1}><StyleThumb id={id} /></StyleCell>
            ))}
            <GalleryScroll>
              <GalleryArrow $off><UpCaret /></GalleryArrow>
              <GalleryArrow><DownCaret /></GalleryArrow>
              <GalleryArrow><BarMark /><DownCaret /></GalleryArrow>
            </GalleryScroll>
          </Gallery>
        </GroupBody>
        <GroupLabel $ls={-1.8}>グラフ スタイル</GroupLabel>
      </RibbonGroup>
      <RibbonGroup $w={98}>
        <GroupBody>
          <RibbonButton $w={44} $ml={5}>
            <IconSlot $dx={1}><SwitchIcon /></IconSlot>
            <RibbonLabel a="行/列の" la={-.5} b="切り替え" lb={-1.5} />
          </RibbonButton>
          <RibbonButton $w={42} $ml={1}>
            <IconSlot $dx={1}><SelectDataIcon /></IconSlot>
            <RibbonLabel a="データの" la={-1.3} b="選択" />
          </RibbonButton>
        </GroupBody>
        <GroupLabel $ls={-1.8}>データ</GroupLabel>
      </RibbonGroup>
      <RibbonGroup $w={73}>
        <GroupBody>
          <RibbonButton $w={62} $ml={5}>
            <IconSlot><ChangeTypeIcon /></IconSlot>
            <RibbonLabel a="グラフの種類" la={-1.1} b="の変更" lb={-.6} />
          </RibbonButton>
        </GroupBody>
        <GroupLabel>種類</GroupLabel>
      </RibbonGroup>
      <RibbonGroup $w={51}>
        <GroupBody>
          <RibbonButton $w={42} $ml={4}>
            <IconSlot $dx={1}><MoveIcon /></IconSlot>
            <RibbonLabel a="グラフの" la={-1.2} b="移動" />
          </RibbonButton>
        </GroupBody>
        <GroupLabel>場所</GroupLabel>
      </RibbonGroup>
      <Collapse><Chevron /></Collapse>
    </Ribbon>

    <FormulaBar>
      <NameBox>グラフ 2</NameBox>
      <FormulaInput><DownChevron /></FormulaInput>
    </FormulaBar>

    <SheetArea>
      <Sheet />
      <VScroll>
        <VButton $h={15}><UpCaret $color="#888" /></VButton>
        <VThumb />
        <VTrack />
        <VButton $h={14}><DownCaret /></VButton>
      </VScroll>
    </SheetArea>

    <TabBar>
      <NavArrows>
        <SideCaret />
        <SideCaret $right />
      </NavArrows>
      <SheetTab $w={46} $active>1月</SheetTab>
      <SheetTab $w={72}>Sheet1</SheetTab>
      <TabSeparator />
      <AddSheet><AddIcon /></AddSheet>
      <SplitDots><span /><span /><span /></SplitDots>
      <HScroll>
        <HButton><SideCaret $color="#666" /></HButton>
        <HThumb />
        <HTrack />
        <HButton><SideCaret $right $color="#666" /></HButton>
      </HScroll>
    </TabBar>

    <StatusBar>
      <StatusItem $ml={8} $w={50}>準備完了</StatusItem>
      <StatusItem $ml={18} $w={14}><MacroIcon /></StatusItem>
      <StatusItem $ml={299} $w={83} $ls={.6}>平均: 60770</StatusItem>
      <StatusItem $w={102}>データの個数: 19</StatusItem>
      <StatusItem $w={94} $ls={.3}>合計: 729240</StatusItem>
      <StatusItem>
        <ViewButton $w={38} $active><NormalViewIcon /></ViewButton>
        <ViewButton $w={38}><PageViewIcon /></ViewButton>
        <ViewButton $w={38}><BreakViewIcon /></ViewButton>
      </StatusItem>
      <ZoomSign $w={15}>−</ZoomSign>
      <ZoomTrack />
      <ZoomSign $w={14}>+</ZoomSign>
      <StatusItem $ml={14} $ls={.4}>100%</StatusItem>
    </StatusBar>

    {/* selection marks on the sheet */}
    <Marker $x={30} $y={295} $w={3} $h={5} $color="#7f58b6" />
    <Marker $x={30} $y={395} $w={3} $h={5} $color="#7f58b6" />
    <Marker $x={493} $y={280} $w={2} $h={17} $color="#c0404a" />
    <Marker $x={491} $y={277} $w={5} $h={5} $color="#c0404a" />
    <Marker $x={491} $y={295} $w={5} $h={5} $color="#c0404a" />
    <Marker $x={493} $y={300} $w={2} $h={38} $color="#4472c4" />

    <Chart>
      <ChartTitle>グラフ タイトル</ChartTitle>
      <ChartPlot />
      <DataTable>
        <colgroup>
          <col style={{width: 64}} />
          <col style={{width: 96}} />
          <col style={{width: 97}} />
          <col style={{width: 96}} />
          <col style={{width: 97}} />
        </colgroup>
        <tbody>
          <tr>
            <td />
            <td>ワニchanぬいぐ<br />るみ</td>
            <td>爬虫類になれる<br />パウダー</td>
            <td>ピンク色に染め<br />るヘアカラー</td>
            <td>恒温動物に進化<br />するサプリメン<br />ト</td>
          </tr>
          {tableRows.map(row => (
            <tr key={row.name}>
              <td><LegendCell><Swatch $color={row.color} />{row.name}</LegendCell></td>
              {row.cells.map((v, i) => <td key={i}>{v}</td>)}
            </tr>
          ))}
        </tbody>
      </DataTable>
      <Handle $x={0} $y={0} />
      <Handle $x={50} $y={0} />
      <Handle $x={100} $y={0} />
      <Handle $x={0} $y={50} />
      <Handle $x={100} $y={50} />
      <Handle $x={0} $y={100} />
      <Handle $x={50} $y={100} />
      <Handle $x={100} $y={100} />
    </Chart>

    <ChartTools>
      <ToolButton><PlusIcon /></ToolButton>
      <ToolButton><BrushIcon /></ToolButton>
      <ToolButton><FunnelIcon /></ToolButton>
    </ChartTools>

    <LayoutMenu>
      {layouts.map((l, i) => (
        <LayoutThumb key={i} $active={i === 4}><LayoutIcon l={l} /></LayoutThumb>
      ))}
    </LayoutMenu>

    <Tip>
      <TipTitle>レイアウト 5</TipTitle>
      <div>次のグラフ要素を示しています:</div>
      <div>- グラフ タイトル</div>
      <div>- データ テーブル</div>
      <div>- 縦軸のタイトル</div>
      <div>- 縦軸</div>
      <div>- 目盛線</div>
    </Tip>

    <Cursor width="13" height="19" viewBox="0 0 13 19">
      <path d="M.5.5V15l3.500-3 2.500 6 2.500-1-2.500-5.800H11z" fill="#fff" stroke="#000" />
    </Cursor>
  </Window>
);

export default App;
